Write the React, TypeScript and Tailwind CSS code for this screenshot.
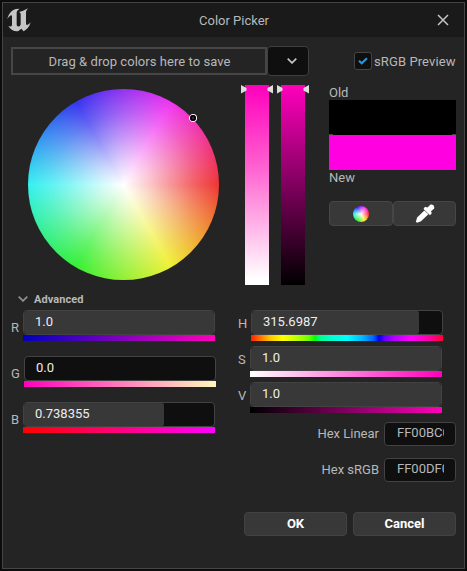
import type { ReactNode } from "react";

function Logo() {
  return (
    <svg width="24" height="24" viewBox="0 0 72 72" className="block" fill="#c6c6c6">
      <path d="M1 33C4 18 14 6 27 3L38 2C32 6 29 9 29 14V49C29 55 34 58 38 54L41 50V19C41 15 39 13 35 12C44 11 52 7 64 1C58 7 57 10 57 15V46C57 53 62 53 71 43C67 57 59 65 50 70L43 62L33 70C20 71 11 65 4 54C11 57 15 55 15 50V25C15 19 9 20 1 33Z" />
    </svg>
  );
}

function Chevron({ className }: { className: string }) {
  return (
    <svg width="10" height="6" viewBox="0 0 10 6" className={className} fill="none" stroke="currentColor" strokeWidth="1.7">
      <path d="M0.7 0.7L5 4.9L9.3 0.7" />
    </svg>
  );
}

function Handles() {
  return (
    <svg width="32" height="9" viewBox="0 0 32 9" className="-ml-1 block" fill="#dedede">
      <path d="M0 0L5.5 3V5.5L0 8.5ZM32 0L26.500 3V5.500L32 8.500Z" />
    </svg>
  );
}

function Eyedropper() {
  return (
    <svg width="20" height="19" viewBox="0 0 20 19" className="block" fill="#fff">
      <path d="M10 2.800L12.500 3.500L15 1C17 -0.500 20.300 2 19 4.800L16 7.300L16.800 9.200L15 11.200L8.500 5Z" />
      <path d="M9.300 6.500L2.200 13.500L0.800 17.800L2 18.800L6 17.300L13.400 10.200Z" />
    </svg>
  );
}

interface ChannelProps {
  label: string;
  value: string;
  fill: string;
  ramp: string;
  offset?: string;
  labelTop?: string;
}

function Channel({ label, value, fill, ramp, offset = "", labelTop = "pt-[10px]" }: ChannelProps) {
  return (
    <div className="flex h-[31px]">
      <span className={`w-3 shrink-0 leading-4 text-[#b8b8b8] ${labelTop}`}>{label}</span>
      <div className={`w-[192px] ${offset}`}>
        <div className="h-[25px] overflow-hidden rounded-[4px] border border-[#424242] bg-[#0f0f0f]">
          <div className={`h-full rounded-[2px] bg-[#383838] ${fill}`}>
            <span className="block pl-[11px] leading-[21px] text-[#eeeeee]">{value}</span>
          </div>
        </div>
        <div className={`h-[6px] ${ramp}`} />
      </div>
    </div>
  );
}

function HexRow({ label, value }: { label: string; value: string }) {
  return (
    <div className="flex h-6 items-center justify-end">
      <span className="mr-[5px] text-[#b8b8b8]">{label}</span>
      <div className="h-6 w-[72px] rounded-[4px] border border-[#424242] bg-[#0f0f0f] px-3">
        <div className="w-[47px] overflow-hidden whitespace-nowrap leading-[20px] text-[#b8b8b8]">{value}</div>
      </div>
    </div>
  );
}

function Button({ children }: { children: ReactNode }) {
  return (
    <button className="h-6 w-[103px] rounded-[4px] border border-[#424242] bg-[#383838] text-[13px] leading-[22px] font-bold text-white">
      {children}
    </button>
  );
}

const wheel =
  "bg-[radial-gradient(circle_closest-side,#fff_0%,rgba(255,255,255,0.75)_25%,rgba(255,255,255,0.48)_50%,rgba(255,255,255,0.22)_75%,rgba(255,255,255,0)_100%),conic-gradient(from_90deg,#ef3434,#f0f034_60deg,#34ef34_120deg,#34f0f0_180deg,#3434ef_240deg,#f034f0_300deg,#ef3434)]";

export default function App() {
  return (
    <div className="h-[571px] w-[467px] bg-[#0c0c0c] pt-[2px] pl-[2px] font-['Roboto','Liberation_Sans',sans-serif] text-[13px] text-[#b8b8b8]">
      <div className="h-[567px] w-[463px] border border-[#454545] bg-[#242424]">
        <header className="flex h-[34px] bg-[#1a1a1a]">
          <div className="w-[196px] pt-[5px] pl-1"><Logo /></div>
          <h1 className="flex-1 pt-[10px] leading-4">Color Picker</h1>
          <svg width="12" height="12" viewBox="0 0 12 12" className="mt-[11px] mr-[15px]" fill="none" stroke="#c4c4c4" strokeWidth="1.500">
            <path d="M1 1L11 11M11 1L1 11" />
          </svg>
        </header>
        <main className="pr-[5px] pl-2">
          <div className="flex pt-[9px]">
            <div className="mt-px h-7 w-[256px] border-2 border-[#464646] pt-px pl-px text-center leading-6 tracking-[0.05px]">
              Drag &amp; drop colors here to save
            </div>
            <div className="flex h-[30px] w-[42px] items-center rounded-[4px] border border-[#404040] bg-[#0f0f0f] pl-[19px]">
              <Chevron className="text-[#c4c4c4]" />
            </div>
            <div className="flex h-[30px] items-center pl-[45px]">
              <div className="flex size-[18px] items-center justify-center rounded-[3px] border border-[#454545] bg-[#0f0f0f]">
                <svg width="10" height="8" viewBox="0 0 10 8" fill="none" stroke="#199ade" strokeWidth="2.200">
                  <path d="M1 3.800L3.700 6.300L9 1.200" />
                </svg>
              </div>
              <span className="mt-px ml-[2px] whitespace-nowrap tracking-[0.1px]">sRGB Preview</span>
            </div>
          </div>

          <div className="flex h-[215px] pt-[9px]">
            <div className="w-[234px] pt-[4px] pl-[17px]">
              <div className={`relative size-[191px] rounded-full ${wheel}`}>
                <svg width="10" height="10" viewBox="0 0 10 10" className="absolute top-6 left-40" fill="none">
                  <circle cx="5" cy="5" r="3.500" fill="#4b1740" stroke="#fff" strokeWidth="1.100" />
                  <circle cx="5" cy="5" r="2.200" stroke="#000" strokeWidth="1.500" />
                </svg>
              </div>
            </div>
            <div className="flex gap-3">
              <div className="h-[200px] w-6 bg-[linear-gradient(#ff00bc,#ff5fd0_40%,#ffa5e3_65%,#fff_97%)]"><Handles /></div>
              <div className="h-[200px] w-6 bg-[linear-gradient(#ff00bc,#000)]"><Handles /></div>
            </div>
            <div className="ml-6 w-[127px]">
              <div className="h-[15px] leading-[15px]">Old</div>
              <div className="flex h-[35px] items-end justify-between bg-black">
                <span className="h-px w-1 bg-[#464646]" />
                <span className="h-px w-1 bg-[#464646]" />
              </div>
              <div className="h-[35px] bg-[#ff00e1]" />
              <div className="h-[31px] leading-4">New</div>
              <div className="flex">
                <button className="flex h-[25px] w-16 items-center justify-center rounded-[4px] border border-[#464646] bg-[#383838]">
                  <span className="size-4 rounded-full bg-[radial-gradient(circle_closest-side,#fff,rgba(255,255,255,0)),conic-gradient(from_90deg,#ff2424,#f0f024_60deg,#24ef24_120deg,#24f0f0_180deg,#2424ef_240deg,#ff24ff_300deg,#ff2424)]" />
                </button>
                <button className="flex h-[25px] w-[63px] items-center justify-center rounded-[4px] border border-[#464646] bg-[#383838]">
                  <Eyedropper />
                </button>
              </div>
            </div>
          </div>

          <div className="flex h-[19px] items-center pl-[7px]">
            <Chevron className="-mt-1 text-[#909090]" />
            <span className="-mt-px ml-[6px] text-[11px] font-bold tracking-[0.08px]">Advanced</span>
          </div>

          <div className="flex h-[104px]">
            <div className="flex w-[227px] flex-col gap-[15px]">
              <Channel label="R" value="1.0" fill="w-full" ramp="bg-[linear-gradient(90deg,#0000bc,#ff00bc)]" />
              <Channel label="G" value="0.0" fill="w-0 whitespace-nowrap" ramp="bg-[linear-gradient(90deg,#ff00bc,#fff8bc)]" offset="ml-px" />
              <Channel label="B" value="0.738355" fill="w-[140px]" ramp="bg-[linear-gradient(90deg,#f00,#f0f)]" />
            </div>
            <div className="flex flex-col gap-[5px]">
              <Channel
                label="H"
                value="315.6987"
                fill="w-[167px]"
                ramp="bg-[linear-gradient(90deg,#ff2000,#ff8800_6%,#ffc800_10%,#ff0_16.600%,#bf0_24%,#70ff00_30%,#0f0_33.300%,#00ff90_36%,#00ffc8_41%,#0ff_50%,#00b8ff_58%,#0060ff_64%,#0000f0_66.600%,#7000ff_70%,#b800ff_75%,#f0f_83.300%,#ff00b0_92%,#f03)]"
                offset="ml-px"
                labelTop="pt-[6px]"
              />
              <Channel label="S" value="1.0" fill="w-full" ramp="bg-[linear-gradient(90deg,#fff,#ff00bc)]" labelTop="pt-[6px]" />
              <Channel label="V" value="1.0" fill="w-full" ramp="bg-[linear-gradient(90deg,#000,#ff00bc)]" labelTop="pt-[6px]" />
            </div>
          </div>

          <div className="mt-2 flex flex-col gap-3 pr-[3px]">
            <HexRow label="Hex Linear" value="FF00BC00" />
            <HexRow label="Hex sRGB" value="FF00DF00" />
          </div>
          <footer className="mt-[30px] flex justify-end gap-[6px] pr-[3px]">
            <Button>OK</Button>
            <Button>Cancel</Button>
          </footer>
        </main>
      </div>
    </div>
  );
}
